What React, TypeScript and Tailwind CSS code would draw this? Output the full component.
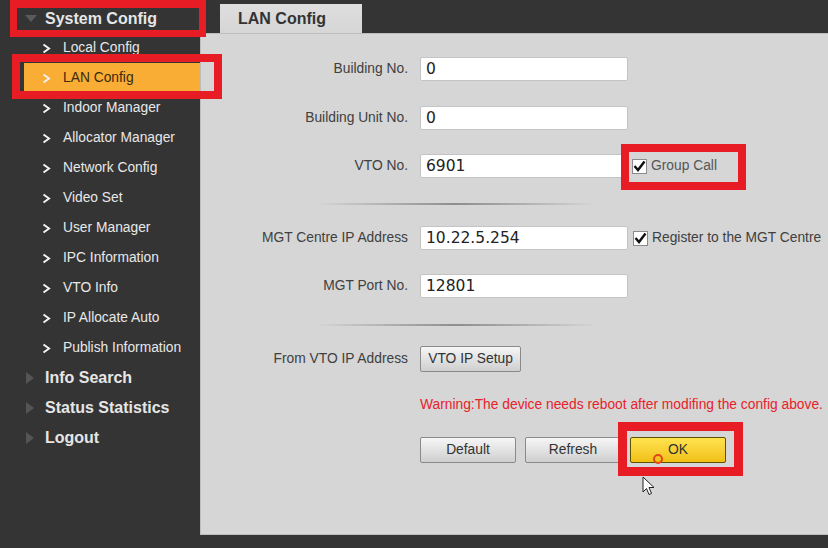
import React from "react";

const subItems = [
  "Local Config",
  "LAN Config",
  "Indoor Manager",
  "Allocator Manager",
  "Network Config",
  "Video Set",
  "User Manager",
  "IPC Information",
  "VTO Info",
  "IP Allocate Auto",
  "Publish Information",
];

const topItems = ["Info Search", "Status Statistics", "Logout"];

function Chevron() {
  return (
    <svg width="9" height="11" viewBox="0 0 9 11" className="shrink-0">
      <polyline points="1.5,1.5 7,5.5 1.5,9.5" fill="none" stroke="#f2f2f2" strokeWidth="2" />
    </svg>
  );
}

function Check() {
  return (
    <span className="flex h-[15px] w-[15px] items-center justify-center border border-[#8c8c8c] bg-white">
      <svg width="13" height="12" viewBox="0 0 13 12">
        <polyline points="1.5,6 5,10 11.5,1.5" fill="none" stroke="#111" strokeWidth="2.4" />
      </svg>
    </span>
  );
}

function Field({ label, value, extra }: { label: string; value: string; extra?: React.ReactNode }) {
  return (
    <div className="flex h-6 items-center">
      <span className="w-[207px] text-right text-[13.8px] text-[#404040]">{label}</span>
      <div className="ml-3 flex h-6 w-[208px] items-center rounded-[2px] border border-[#c4c4c4] bg-white pl-[5px] pt-[2px] font-['DejaVu_Sans',sans-serif] text-[15.5px] text-[#222]">
        {value}
      </div>
      {extra}
    </div>
  );
}

function Separator() {
  return (
    <div className="ml-[116px] h-[2px] w-[278px] bg-gradient-to-r from-[#d5d5d5] via-[#8e8e8e] to-[#d5d5d5]" />
  );
}

function GreyButton({ children, className = "" }: { children: React.ReactNode; className?: string }) {
  return (
    <button
      className={`flex h-[26px] items-center justify-center rounded-[2px] border border-[#8a8a8a] bg-gradient-to-b from-[#f6f6f6] to-[#cfcfcf] text-[13.8px] text-[#333] ${className}`}
    >
      {children}
    </button>
  );
}

export default function App() {
  return (
    <div className="relative flex h-[548px] w-[828px] overflow-hidden bg-[#343434] font-['Liberation_Sans',Arial,sans-serif]">
      {/* Sidebar */}
      <aside className="w-[200px] shrink-0 pt-[4px]">
        <div className="flex h-[29px] items-center">
          <svg width="12" height="8" viewBox="0 0 12 8" className="ml-[25px]">
            <polygon points="0,0 12,0 6,7" fill="#5a5a5a" />
          </svg>
          <span className="ml-[8px] text-[16px] font-bold text-[#e6e6e6]">System Config</span>
        </div>
        {subItems.map((item) => {
          const active = item === "LAN Config";
          return (
            <div
              key={item}
              className={`ml-[24px] flex h-[30px] items-center pl-[18px] ${active ? "bg-[#f9ad34]" : ""}`}
            >
              <Chevron />
              <span className={`ml-[12px] text-[13.8px] ${active ? "text-[#3a2a10]" : "text-[#e8e8e8]"}`}>{item}</span>
            </div>
          );
        })}
        {topItems.map((item) => (
          <div key={item} className="flex h-[30px] items-center">
            <svg width="8" height="12" viewBox="0 0 8 12" className="ml-[26px]">
              <polygon points="0,0 8,6 0,12" fill="#555" />
            </svg>
            <span className="ml-[11px] text-[16px] font-bold text-[#e6e6e6]">{item}</span>
          </div>
        ))}
      </aside>

      {/* Main */}
      <main className="flex flex-1 flex-col">
        <div className="flex h-[33px] shrink-0 items-end pl-[20px]">
          <div className="flex h-[29px] w-[142px] items-center bg-gradient-to-b from-[#dedede] to-[#d6d6d6] pl-[18px] text-[16px] font-bold text-[#333]">
            LAN Config
          </div>
        </div>
        <div className="h-[502px] border border-r-0 border-[#bdbdbd] bg-[#d6d6d6] pt-[23px]">
          <Field label="Building No." value="0" />
          <div className="mt-[25px]">
            <Field label="Building Unit No." value="0" />
          </div>
          <div className="mt-[24px]">
            <Field
              label="VTO No."
              value="6901"
              extra={
                <div className="ml-[4px] flex items-center gap-[4px] text-[13.8px] text-[#555]">
                  <Check />
                  Group Call
                </div>
              }
            />
          </div>
          <div className="mt-[25px]">
            <Separator />
          </div>
          <div className="mt-[21px]">
            <Field
              label="MGT Centre IP Address"
              value="10.22.5.254"
              extra={
                <div className="ml-[5px] flex items-center gap-[4px] text-[13.8px] text-[#404040]">
                  <Check />
                  Register to the MGT Centre
                </div>
              }
            />
          </div>
          <div className="mt-[24px]">
            <Field label="MGT Port No." value="12801" />
          </div>
          <div className="mt-[26px]">
            <Separator />
          </div>
          <div className="mt-[20px] flex h-[26px] items-center">
            <span className="w-[207px] text-right text-[13.8px] text-[#404040]">From VTO IP Address</span>
            <GreyButton className="ml-3 w-[101px]">VTO IP Setup</GreyButton>
          </div>
          <p className="ml-[219px] mt-[25px] text-[13.8px] leading-[16px] text-[#e8222a]">
            Warning:The device needs reboot after modifing the config above.
          </p>
          <div className="ml-[219px] mt-[24px] flex gap-[9px]">
            <GreyButton className="w-[96px]">Default</GreyButton>
            <GreyButton className="w-[96px]">Refresh</GreyButton>
            <button className="flex h-[26px] w-[96px] items-center justify-center rounded-[2px] border border-[#5e5200] bg-gradient-to-b from-[#ffe34e] to-[#f1c10e] text-[13.8px] text-[#333]">
              OK
            </button>
          </div>
        </div>
      </main>

      {/* Annotation boxes */}
      <div className="pointer-events-none absolute left-[10px] top-0 h-[37px] w-[196px] border-[7px] border-t-[8px] border-[#e81c24]" />
      <div className="pointer-events-none absolute left-[12px] top-[54px] h-[45px] w-[210px] border-[8px] border-[#e81c24]" />
      <div className="pointer-events-none absolute left-[621px] top-[144px] h-[46px] w-[125px] border-[8px] border-[#e81c24]" />
      <div className="pointer-events-none absolute left-[618px] top-[422px] h-[54px] w-[125px] border-[9px] border-[#e81c24]" />

      {/* Click marker and cursor */}
      <div className="pointer-events-none absolute left-[653px] top-[454px] h-[10px] w-[10px] rounded-full border-2 border-[#e0461c]" />
      <svg className="pointer-events-none absolute left-[642px] top-[476px]" width="13" height="20" viewBox="0 0 13 20">
        <path d="M1 1 L1 16 L4.5 12.5 L7 18.5 L9.5 17.5 L7 11.5 L12 11.5 Z" fill="#fff" stroke="#222" strokeWidth="1" />
      </svg>
    </div>
  );
}
